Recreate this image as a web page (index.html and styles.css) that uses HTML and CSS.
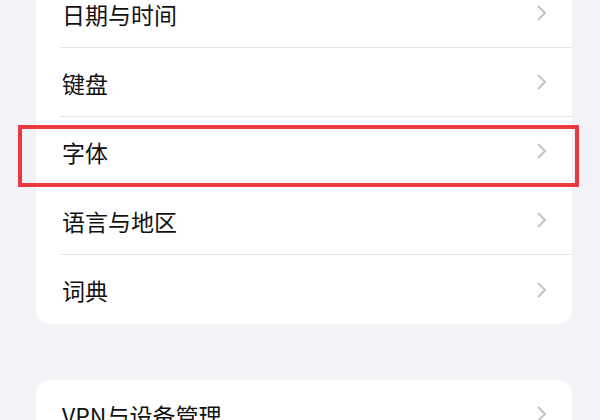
FILE: index.html
```html
<!DOCTYPE html>
<html lang="zh-CN">
<head>
  <meta charset="UTF-8" />
  <meta name="viewport" content="width=device-width, initial-scale=1.0"/>
  <title>通用</title>
  <link rel="stylesheet" href="styles.css">
</head>
<body>
  <div class="page">
    <div class="group first">
      <div class="row"><span class="label">日期与时间</span><svg class="chev" viewBox="0 0 10 16"><polyline points="1.5,1.5 8,8 1.5,14.5"/></svg></div>
      <div class="row"><span class="label">键盘</span><svg class="chev" viewBox="0 0 10 16"><polyline points="1.5,1.5 8,8 1.5,14.5"/></svg></div>
      <div class="row marked"><span class="label">字体</span><svg class="chev" viewBox="0 0 10 16"><polyline points="1.5,1.5 8,8 1.5,14.5"/></svg></div>
      <div class="row"><span class="label">语言与地区</span><svg class="chev" viewBox="0 0 10 16"><polyline points="1.5,1.5 8,8 1.5,14.5"/></svg></div>
      <div class="row"><span class="label">词典</span><svg class="chev" viewBox="0 0 10 16"><polyline points="1.5,1.5 8,8 1.5,14.5"/></svg></div>
    </div>

    <div class="group">
      <div class="row"><span class="label">VPN与设备管理</span><svg class="chev" viewBox="0 0 10 16"><polyline points="1.5,1.5 8,8 1.5,14.5"/></svg></div>
      <div class="row"><span class="label">法律与监管</span><svg class="chev" viewBox="0 0 10 16"><polyline points="1.5,1.5 8,8 1.5,14.5"/></svg></div>
    </div>
  </div>
</body>
</html>
```

FILE: styles.css
```css
:root {
  --bg: #f2f2f7;
  --card: #fff;
  --line: #e3e3e6;
  --chev: #c4c4c7;
  --mark: #ea3a3f;
}

body {
  margin: 0;
  background: var(--bg);
  font-family: "Noto Sans CJK SC", "Noto Sans", sans-serif;
  color: #111;
  height: 420px;
  overflow: hidden;
}

.page {
  padding: 0 28px 0 36px;
}

.group {
  background: var(--card);
  border-radius: 14px;
  margin-bottom: 56px;
}

.group.first {
  margin-top: -21px;
  border-top-left-radius: 0;
  border-top-right-radius: 0;
}

.row {
  position: relative;
  height: 69px;
  display: flex;
  align-items: center;
  justify-content: space-between;
  margin-left: 24px;
  padding-right: 25px;
  border-bottom: 1px solid var(--line);
  box-sizing: border-box;
}

.row:last-child {
  border-bottom: none;
}

.label {
  font-size: 23px;
  line-height: 1;
  padding-left: 2px;
  padding-top: 2px;
}

.chev {
  width: 10px;
  height: 16px;
  fill: none;
  stroke: var(--chev);
  stroke-width: 2;
  stroke-linecap: round;
  stroke-linejoin: round;
}

/* highlight box drawn over the row */
.marked::after {
  content: "";
  position: absolute;
  left: -42px;
  right: -7px;
  top: 8px;
  bottom: -2px;
  border: 4px solid var(--mark);
  pointer-events: none;
}
```
